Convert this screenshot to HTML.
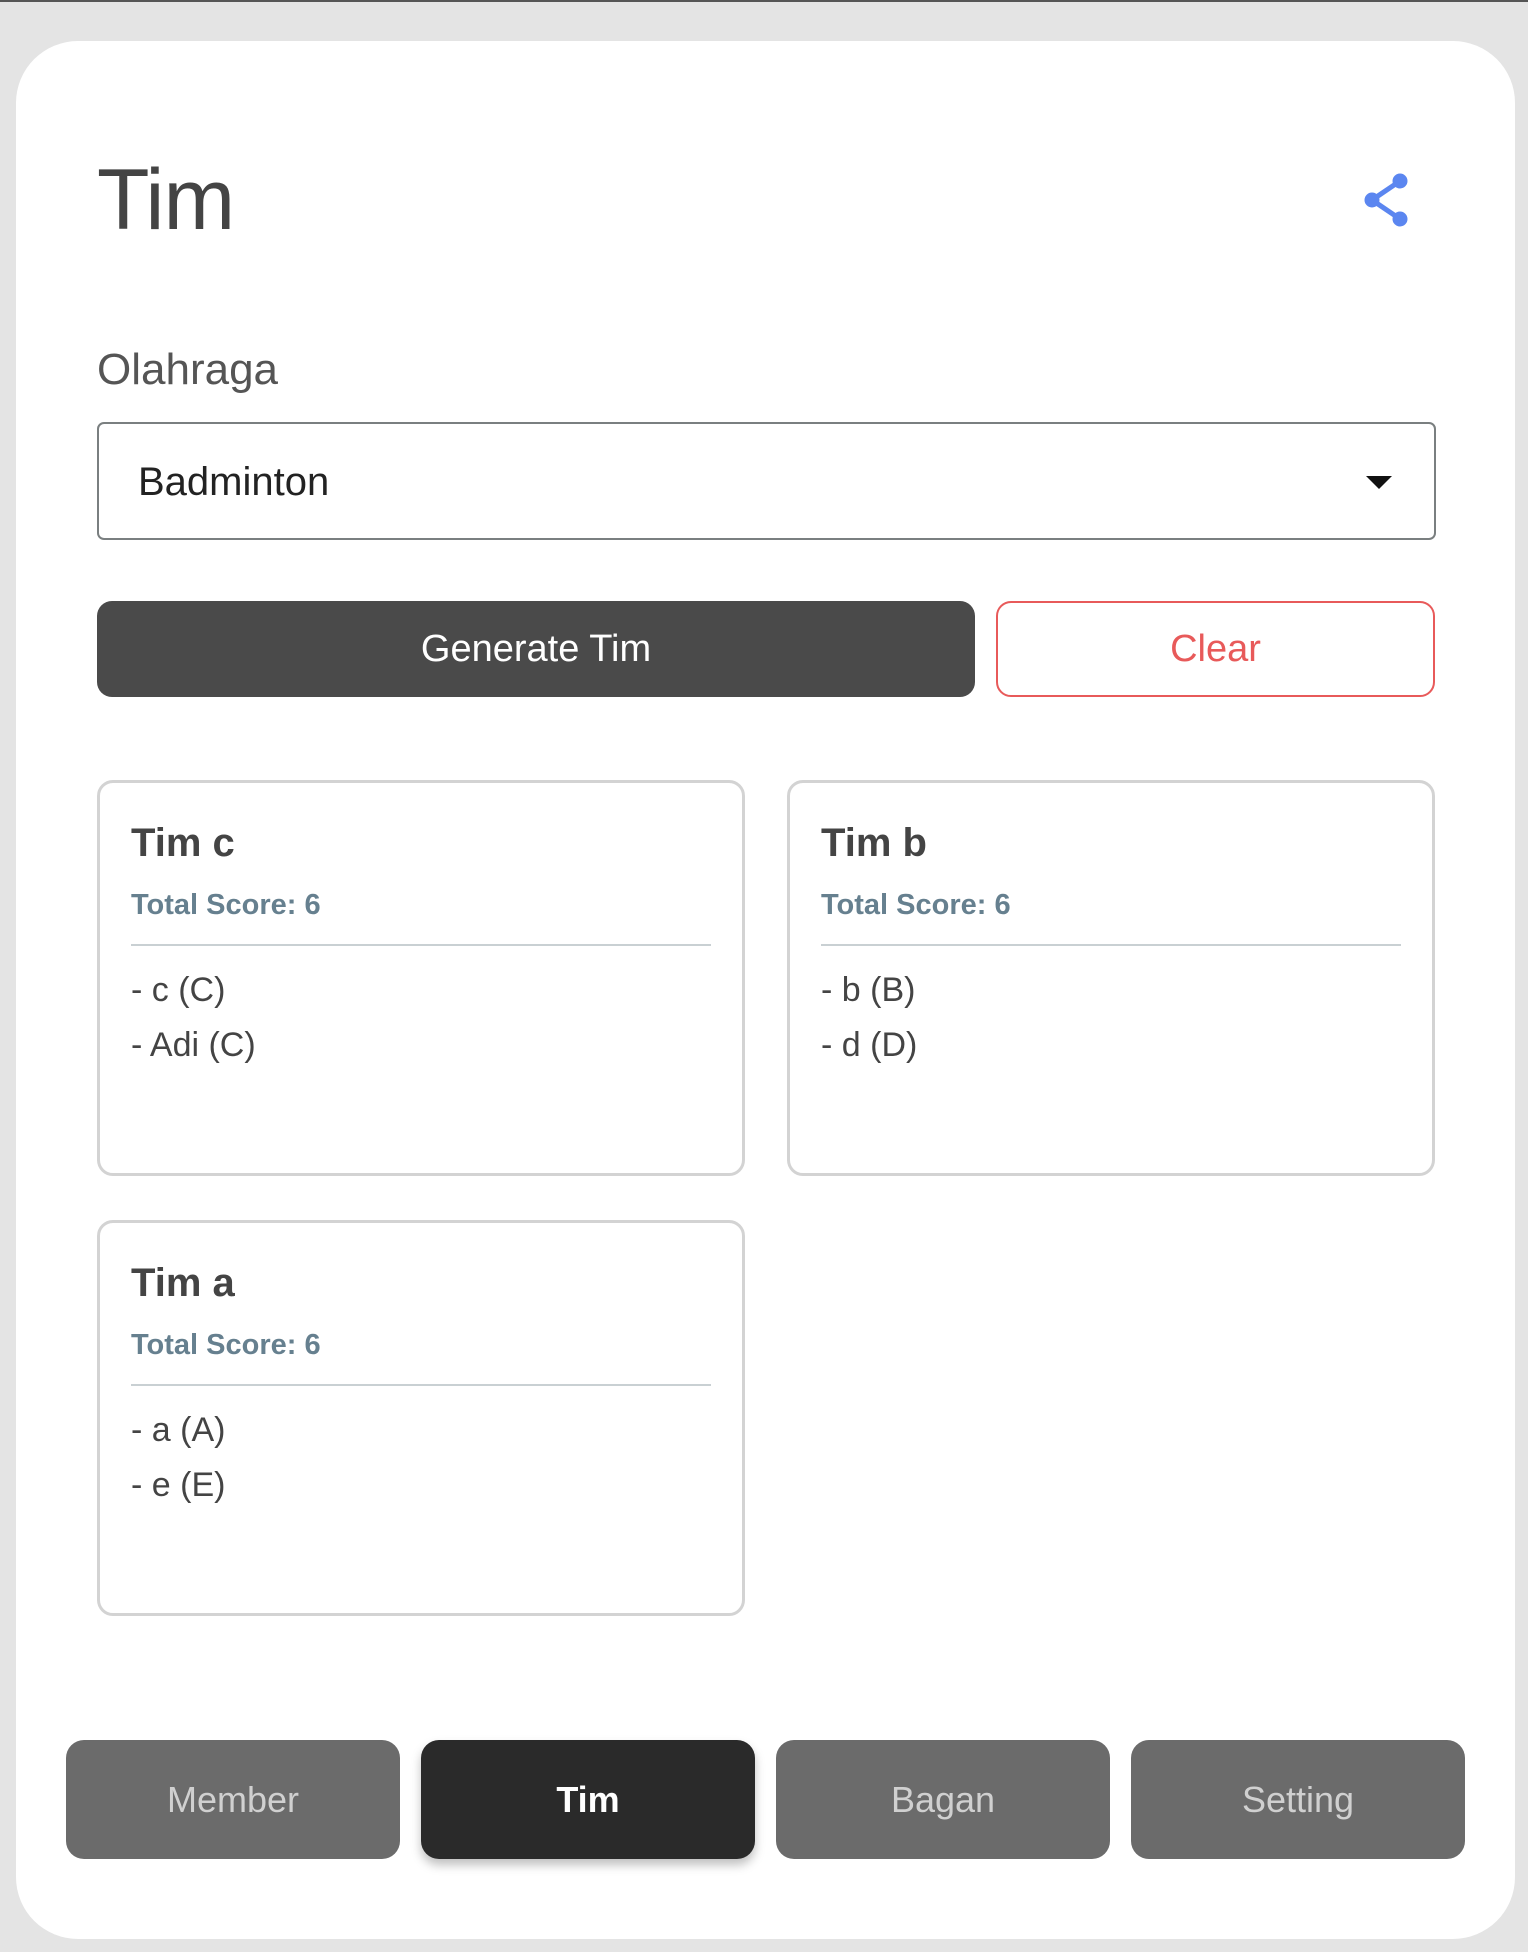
<!DOCTYPE html><html><head><style>
body{margin:0;width:1528px;height:1952px;background:#e4e4e4;font-family:"Liberation Sans",sans-serif;position:relative;overflow:hidden}
.top{position:absolute;left:0;top:0;width:1528px;height:2px;background:#555}
.card{position:absolute;left:16px;top:41px;width:1499px;height:1898px;background:#fff;border-radius:62px}
.a{position:absolute}
.h{left:97px;top:150px;font-size:86px;color:#444;line-height:100px;letter-spacing:-1px}
.lab{left:97px;top:342px;font-size:44px;color:#555;line-height:56px}
.dd{left:97px;top:422px;width:1339px;height:118px;border:2px solid #7a7f80;border-radius:7px;box-sizing:border-box}
.dd span{position:absolute;left:39px;top:33px;font-size:40px;color:#222;line-height:50px}
.tri{position:absolute;right:42px;top:52px;width:0;height:0;border-left:13px solid transparent;border-right:13px solid transparent;border-top:13px solid #111}
.btn{top:601px;height:96px;border-radius:15px;box-sizing:border-box;display:flex;align-items:center;justify-content:center;font-size:38px}
.tc{border:3px solid #d3d3d3;border-radius:16px;box-sizing:border-box;width:648px;height:396px}
.tc .t{position:absolute;left:31px;top:38px;font-size:40px;font-weight:bold;color:#444}
.tc .s{position:absolute;left:31px;top:106px;font-size:29px;font-weight:bold;color:#66808f}
.tc .d{position:absolute;left:31px;right:31px;top:161px;height:2px;background:#c9d0d3}
.tc .i{position:absolute;left:31px;top:180px;font-size:34px;color:#444;line-height:55px}
.nb{top:1740px;height:119px;width:334px;border-radius:18px;background:#6b6b6b;color:#d0d0d0;display:flex;align-items:center;justify-content:center;font-size:36px}
</style></head><body>
<div class="top"></div>
<div class="card"></div>
<div class="a h">Tim</div>
<svg class="a" style="left:1360px;top:173px" width="52" height="54" viewBox="0 0 52 54"><g fill="#5b86f0" stroke="#5b86f0" stroke-width="5"><line x1="40" y1="8" x2="12" y2="27"/><line x1="12" y1="27" x2="40" y2="46"/><circle cx="40" cy="8" r="5"/><circle cx="12" cy="27" r="5"/><circle cx="40" cy="46" r="5"/></g></svg>
<div class="a lab">Olahraga</div>
<div class="a dd"><span>Badminton</span><div class="tri"></div></div>
<div class="a btn" style="left:97px;width:878px;background:#4a4a4a;color:#fff">Generate Tim</div>
<div class="a btn" style="left:996px;width:439px;border:2px solid #e85a5a;color:#e85a5a">Clear</div>
<div class="a tc" style="left:97px;top:780px"><div class="t">Tim c</div><div class="s">Total Score: 6</div><div class="d"></div><div class="i">- c (C)<br>- Adi (C)</div></div>
<div class="a tc" style="left:787px;top:780px"><div class="t">Tim b</div><div class="s">Total Score: 6</div><div class="d"></div><div class="i">- b (B)<br>- d (D)</div></div>
<div class="a tc" style="left:97px;top:1220px"><div class="t">Tim a</div><div class="s">Total Score: 6</div><div class="d"></div><div class="i">- a (A)<br>- e (E)</div></div>
<div class="a nb" style="left:66px">Member</div>
<div class="a nb" style="left:421px;background:#2a2a2a;color:#fff;font-weight:bold;box-shadow:0 6px 10px rgba(0,0,0,.25)">Tim</div>
<div class="a nb" style="left:776px">Bagan</div>
<div class="a nb" style="left:1131px">Setting</div>
</body></html>
